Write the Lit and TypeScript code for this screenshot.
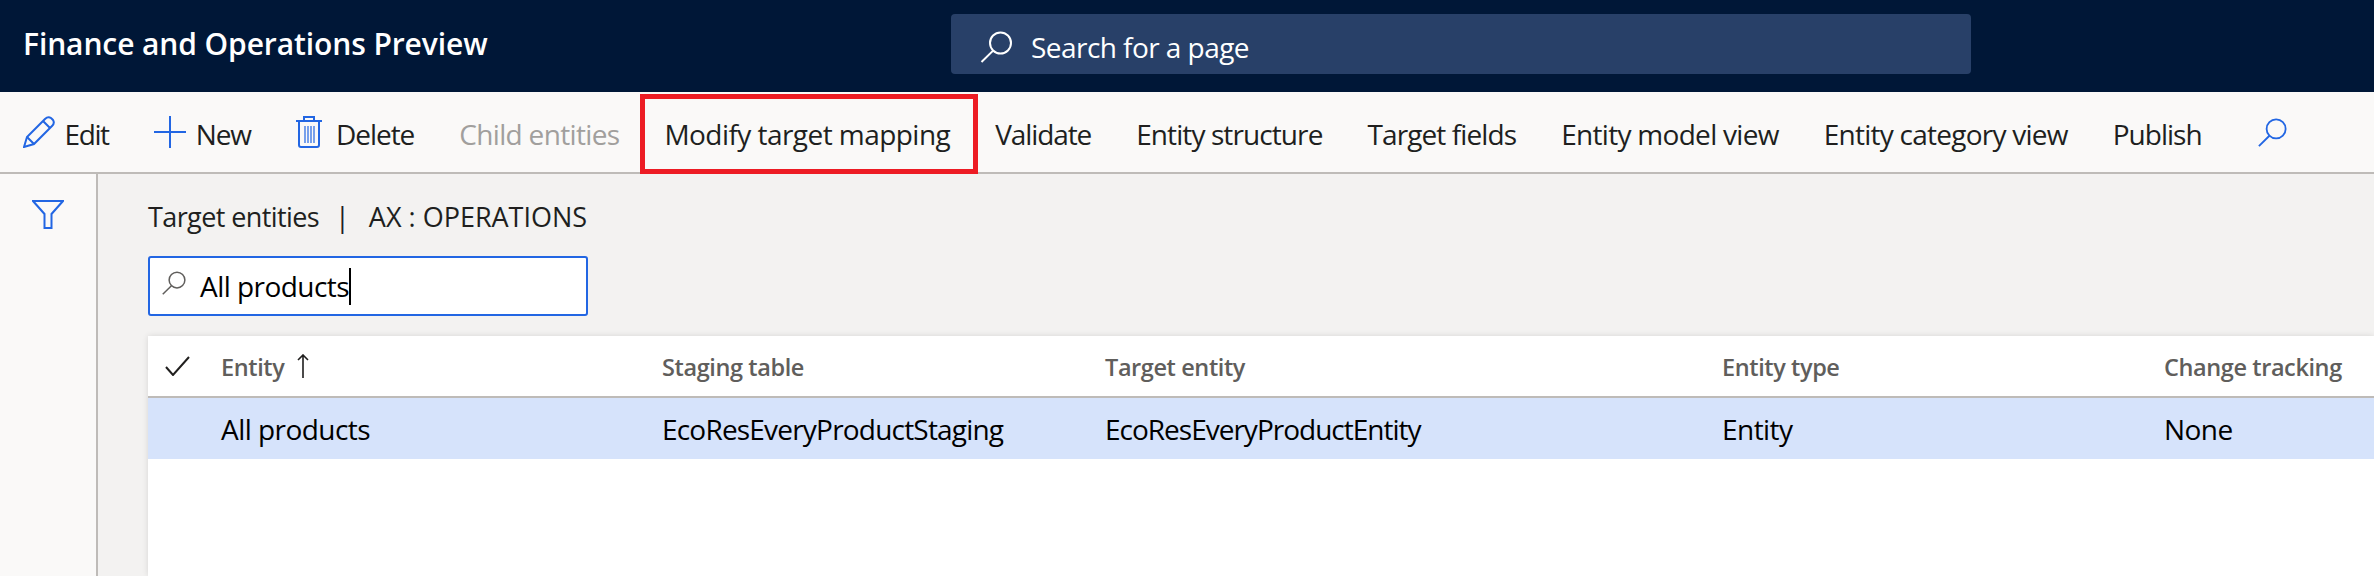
import { LitElement, html, css, svg } from "lit"
import { customElement } from "lit/decorators.js"

const searchIcon = svg`<circle cx="20" cy="12" r="10.5" fill="none" stroke="currentColor" stroke-width="2"/><path d="M12.6 19.6 1 31" fill="none" stroke="currentColor" stroke-width="2"/>`

const commands = [
  { label: "Edit", icon: "edit", track: -1.4 },
  { label: "New", icon: "new", track: -1.05 },
  { label: "Delete", icon: "delete", track: -1.05 },
  { label: "Child entities", disabled: true, track: -0.66 },
  { label: "Modify target mapping", highlight: true, track: -0.55 },
  { label: "Validate", track: -1.1 },
  { label: "Entity structure", track: -0.9 },
  { label: "Target fields", track: -0.9 },
  { label: "Entity model view", track: -0.7 },
  { label: "Entity category view", track: -0.75 },
  { label: "Publish", track: -1 },
]

const columns = ["Staging table", "Target entity", "Entity type", "Change tracking"]
const row = [
  { text: "EcoResEveryProductStaging", track: -0.8 },
  { text: "EcoResEveryProductEntity", track: -1 },
  { text: "Entity", track: -0.55 },
  { text: "None", track: -0.55 },
]

@customElement("app-root")
export class AppRoot extends LitElement {
  static styles = css`
    :host {
      display: block;
      height: 576px;
      overflow: hidden;
      font-family: "Open Sans", "Liberation Sans", sans-serif;
      font-size: 28px;
      letter-spacing: -0.55px;
      color: #201f1e;
      background: #f3f2f1;
    }

    svg {
      display: block;
      flex: none;
    }

    .header {
      display: grid;
      grid-template-columns: 951px 1020px 1fr;
      align-items: start;
      height: 92px;
      background: #001737;
      color: #fff;
    }

    .title {
      padding: 23px 0 0 23px;
      font-size: 30px;
      font-weight: 600;
      letter-spacing: -0.1px;
    }

    .page-search {
      display: flex;
      align-items: center;
      gap: 18px;
      height: 60px;
      margin-top: 14px;
      padding: 6px 0 0 29px;
      box-sizing: border-box;
      border-radius: 4px;
      background: #284068;
    }

    .page-search svg {
      width: 33px;
      height: 32px;
    }

    .commands {
      display: flex;
      align-items: center;
      height: 80px;
      background: #faf9f8;
      border-bottom: 2px solid #bebbb8;
    }

    .command {
      position: relative;
      display: flex;
      align-items: center;
      gap: 10px;
      padding: 0 22.5px;
      white-space: nowrap;
    }

    .command span {
      margin-top: 4px;
    }

    .command svg {
      width: 32px;
      height: 32px;
      color: #2266e3;
    }

    .command svg.trash {
      width: 26px;
      margin-right: 4px;
    }

    .command.disabled {
      color: #a19f9d;
    }

    .command.highlight::after {
      content: "";
      position: absolute;
      left: -2px;
      right: -5px;
      top: -17px;
      height: 80px;
      border: 5px solid #ed1c24;
      box-sizing: border-box;
    }

    .find {
      margin-left: 34px;
      width: 29px;
      height: 29px;
      color: #2266e3;
    }

    .main {
      display: flex;
      height: 402px;
    }

    .rail {
      flex: none;
      width: 98px;
      padding: 26px 0 0 32px;
      box-sizing: border-box;
      background: #faf9f8;
      border-right: 2px solid #bebbb8;
      color: #2266e3;
    }

    .rail svg {
      width: 32px;
      height: 29px;
    }

    .content {
      flex: 1;
      min-width: 0;
      padding: 22px 0 0 50px;
    }

    .crumb {
      display: flex;
      align-items: center;
      height: 40px;
      font-size: 27px;
      white-space: nowrap;
    }

    .crumb-name {
      letter-spacing: -0.6px;
    }

    .crumb-bar {
      margin: 0 19px 0 16px;
      letter-spacing: 0;
    }

    .crumb-scope {
      letter-spacing: 0;
    }

    .filter {
      display: flex;
      align-items: center;
      width: 440px;
      height: 60px;
      margin-top: 20px;
      padding-left: 12px;
      gap: 14px;
      box-sizing: border-box;
      background: #fff;
      border: 2px solid #2266e3;
      border-radius: 3px;
      color: #000;
    }

    .filter svg {
      width: 24px;
      height: 24px;
      margin-top: -6px;
      color: #605e5c;
    }

    .caret {
      width: 2px;
      height: 37px;
      margin-left: -14px;
      background: #000;
    }

    .grid {
      height: 240px;
      margin-top: 20px;
      background: #fff;
      box-shadow: 0 0 6px rgba(0, 0, 0, 0.12);
    }

    .grid-row {
      display: grid;
      grid-template-columns: 73px 441px 443px 617px 442px 1fr;
      align-items: center;
      white-space: nowrap;
    }

    .grid-head {
      height: 62px;
      padding-top: 2px;
      box-sizing: border-box;
      border-bottom: 2px solid #bebbb8;
      font-size: 23.5px;
      font-weight: 600;
      letter-spacing: -0.4px;
      color: #605e5c;
    }

    .grid-body {
      height: 61px;
      background: #d6e3fb;
      color: #000;
    }

    .check {
      width: 25px;
      height: 20px;
      margin: -2px 0 0 17px;
      color: #201f1e;
    }

    .sort {
      display: flex;
      align-items: center;
      gap: 12px;
    }

    .sort svg {
      width: 14px;
      height: 24px;
      margin-top: -2px;
      color: #201f1e;
    }
  `

  renderCommandIcon(name?: string) {
    if (name === "edit") {
      return html`<svg viewBox="0 0 32 32" fill="none" stroke="currentColor" stroke-width="2"><path d="M1 31l3-10L22 3q3-3 6-1l2 2q2 3-1 6L11 28z"/><path d="M20 5l7 7M4 21l7 7"/></svg>`
    }
    if (name === "new") {
      return html`<svg viewBox="0 0 32 32" fill="none" stroke="currentColor" stroke-width="2"><path d="M16 0v32M0 16h32"/></svg>`
    }
    if (name === "delete") {
      return html`<svg class="trash" viewBox="3 0 26 32" fill="none" stroke="currentColor" stroke-width="2"><path d="M3 5h26M11 5V1h10v4M6 5v24q0 2 2 2h16q2 0 2-2V5"/><path stroke-width="1.2" d="M12 10v17M15 10v17M18 10v17M21 10v17"/></svg>`
    }
    return ""
  }

  render() {
    return html`
      <div class="header">
        <div class="title">Finance and Operations Preview</div>
        <div class="page-search">
          <svg viewBox="0 0 32 32">${searchIcon}</svg>
          <span>Search for a page</span>
        </div>
      </div>
      <div class="commands">
        ${commands.map(c => html`
          <div class="command ${c.disabled ? "disabled" : ""} ${c.highlight ? "highlight" : ""}">
            ${this.renderCommandIcon(c.icon)}
            <span style="letter-spacing: ${c.track}px">${c.label}</span>
          </div>
        `)}
        <svg class="find" viewBox="0 0 32 32">${searchIcon}</svg>
      </div>
      <div class="main">
        <div class="rail">
          <svg viewBox="0 0 32 29" fill="none" stroke="currentColor" stroke-width="2"><path d="M1 1h30L19.500 14v14h-7V14z"/></svg>
        </div>
        <div class="content">
          <div class="crumb">
            <span class="crumb-name">Target entities</span>
            <span class="crumb-bar">|</span>
            <span class="crumb-scope">AX : OPERATIONS</span>
          </div>
          <div class="filter">
            <svg viewBox="0 0 32 32">${searchIcon}</svg>
            <span>All products</span>
            <span class="caret"></span>
          </div>
          <div class="grid">
            <div class="grid-row grid-head">
              <svg class="check" viewBox="0 0 25 20" fill="none" stroke="currentColor" stroke-width="2"><path d="M1 11l7 8L24 1"/></svg>
              <div class="sort">
                <span>Entity</span>
                <svg viewBox="0 0 14 24" fill="none" stroke="currentColor" stroke-width="1.6"><path d="M7 24V1M2 6l5-5 5 5"/></svg>
              </div>
              ${columns.map(c => html`<div>${c}</div>`)}
            </div>
            <div class="grid-row grid-body">
              <span></span>
              <div>All products</div>
              ${row.map(c => html`<div style="letter-spacing: ${c.track}px">${c.text}</div>`)}
            </div>
          </div>
        </div>
      </div>
    `
  }
}
